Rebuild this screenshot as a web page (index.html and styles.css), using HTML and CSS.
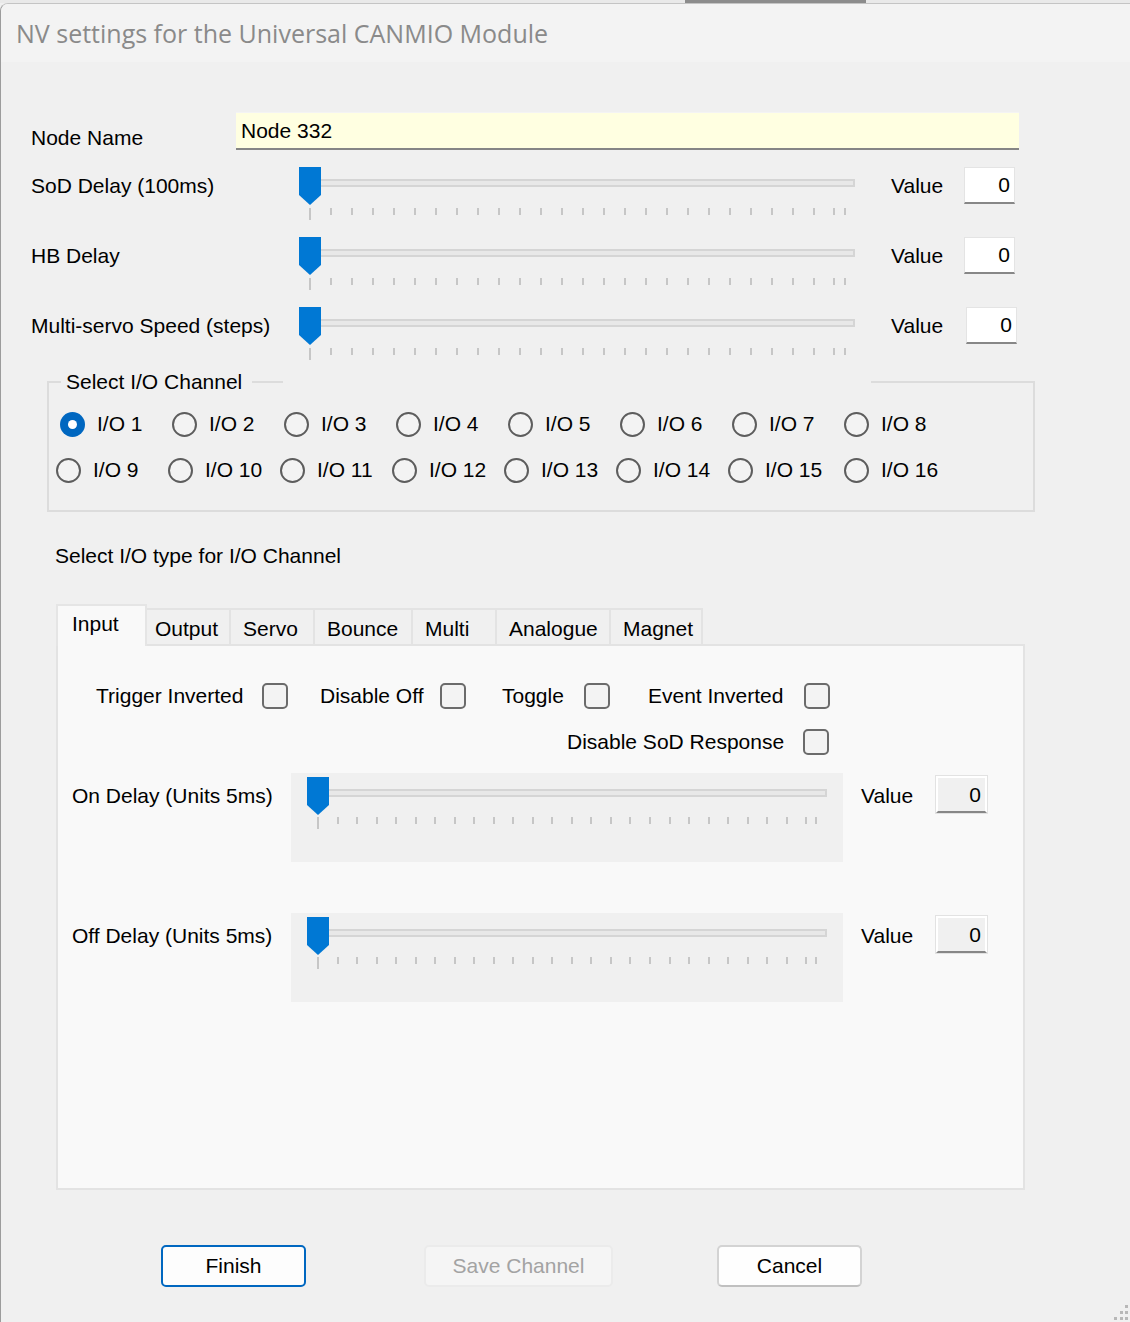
FILE: index.html
```html
<!DOCTYPE html>
<html>
<head>
<meta charset="utf-8">
<title>NV settings</title>
<link rel="stylesheet" href="styles.css">
</head>
<body>
<div class="strip"></div>
<div class="window">
  <div class="titlebar"><span class="title">NV settings for the Universal CANMIO Module</span></div>
  <div class="client">
    <div class="row-node">
      <div class="lbl lbl-node">Node Name</div>
      <div class="textbox">Node 332</div>
    </div>

    <div class="srow">
      <div class="lbl slbl">SoD Delay (100ms)</div>
      <div class="slider big">
        <div class="sl-top"><div class="track"></div><svg class="thumb" viewBox="0 0 22 38"><path d="M0 0H22V28L11 38L0 28Z" fill="#0078d4"/></svg></div>
        <div class="ticks"><div class="tk-run"><div class="tk-first"></div></div><div class="tk-last"></div></div>
      </div>
      <div class="lbl vlbl">Value</div>
      <div class="vbox">0</div>
    </div>

    <div class="srow">
      <div class="lbl slbl">HB Delay</div>
      <div class="slider big">
        <div class="sl-top"><div class="track"></div><svg class="thumb" viewBox="0 0 22 38"><path d="M0 0H22V28L11 38L0 28Z" fill="#0078d4"/></svg></div>
        <div class="ticks"><div class="tk-run"><div class="tk-first"></div></div><div class="tk-last"></div></div>
      </div>
      <div class="lbl vlbl">Value</div>
      <div class="vbox">0</div>
    </div>

    <div class="srow">
      <div class="lbl slbl">Multi-servo Speed (steps)</div>
      <div class="slider big">
        <div class="sl-top"><div class="track"></div><svg class="thumb" viewBox="0 0 22 38"><path d="M0 0H22V28L11 38L0 28Z" fill="#0078d4"/></svg></div>
        <div class="ticks"><div class="tk-run"><div class="tk-first"></div></div><div class="tk-last"></div></div>
      </div>
      <div class="lbl vlbl">Value</div>
      <div class="vbox vbox-shift">0</div>
    </div>

    <div class="group">
      <div class="gtop">
        <div class="gseg gseg-a"></div>
        <div class="lbl glegend">Select I/O Channel</div>
        <div class="gseg gseg-b"></div>
        <div class="ggap"></div>
        <div class="gseg gseg-c"></div>
      </div>
      <div class="rrow rrow1">
        <div class="ritem"><span class="radio on"></span><span class="lbl">I/O 1</span></div>
        <div class="ritem"><span class="radio"></span><span class="lbl">I/O 2</span></div>
        <div class="ritem"><span class="radio"></span><span class="lbl">I/O 3</span></div>
        <div class="ritem"><span class="radio"></span><span class="lbl">I/O 4</span></div>
        <div class="ritem"><span class="radio"></span><span class="lbl">I/O 5</span></div>
        <div class="ritem"><span class="radio"></span><span class="lbl">I/O 6</span></div>
        <div class="ritem"><span class="radio"></span><span class="lbl">I/O 7</span></div>
        <div class="ritem"><span class="radio"></span><span class="lbl">I/O 8</span></div>
      </div>
      <div class="rrow rrow2">
        <div class="ritem"><span class="radio"></span><span class="lbl">I/O 9</span></div>
        <div class="ritem"><span class="radio"></span><span class="lbl">I/O 10</span></div>
        <div class="ritem"><span class="radio"></span><span class="lbl">I/O 11</span></div>
        <div class="ritem"><span class="radio"></span><span class="lbl">I/O 12</span></div>
        <div class="ritem"><span class="radio"></span><span class="lbl">I/O 13</span></div>
        <div class="ritem"><span class="radio"></span><span class="lbl">I/O 14</span></div>
        <div class="ritem"><span class="radio"></span><span class="lbl">I/O 15</span></div>
        <div class="ritem ritem-last"><span class="radio"></span><span class="lbl">I/O 16</span></div>
      </div>
    </div>

    <div class="lbl typelbl">Select I/O type for I/O Channel</div>

    <div class="tabs">
      <div class="tab sel">Input</div>
      <div class="tab t-output">Output</div>
      <div class="tab t-servo">Servo</div>
      <div class="tab t-bounce">Bounce</div>
      <div class="tab t-multi">Multi</div>
      <div class="tab t-analogue">Analogue</div>
      <div class="tab t-magnet">Magnet</div>
    </div>
    <div class="panel">
      <div class="cbrow cbrow1">
        <div class="cbitem cb-a"><span class="lbl">Trigger Inverted</span><span class="cbox"></span></div>
        <div class="cbitem cb-b"><span class="lbl">Disable Off</span><span class="cbox"></span></div>
        <div class="cbitem cb-c"><span class="lbl">Toggle</span><span class="cbox"></span></div>
        <div class="cbitem cb-d"><span class="lbl">Event Inverted</span><span class="cbox"></span></div>
      </div>
      <div class="cbrow cbrow2">
        <div class="cbitem cb-e"><span class="lbl">Disable SoD Response</span><span class="cbox"></span></div>
      </div>

      <div class="psec psec1">
        <div class="lbl plbl">On Delay (Units 5ms)</div>
        <div class="slpanel">
          <div class="slider small">
            <div class="sl-top"><div class="track"></div><svg class="thumb" viewBox="0 0 22 38"><path d="M0 0H22V28L11 38L0 28Z" fill="#0078d4"/></svg></div>
            <div class="ticks"><div class="tk-run"><div class="tk-first"></div></div><div class="tk-last"></div></div>
          </div>
        </div>
        <div class="lbl pvlbl">Value</div>
        <div class="vbox vbox-grey">0</div>
      </div>

      <div class="psec psec2">
        <div class="lbl plbl">Off Delay (Units 5ms)</div>
        <div class="slpanel">
          <div class="slider small">
            <div class="sl-top"><div class="track"></div><svg class="thumb" viewBox="0 0 22 38"><path d="M0 0H22V28L11 38L0 28Z" fill="#0078d4"/></svg></div>
            <div class="ticks"><div class="tk-run"><div class="tk-first"></div></div><div class="tk-last"></div></div>
          </div>
        </div>
        <div class="lbl pvlbl">Value</div>
        <div class="vbox vbox-grey">0</div>
      </div>
    </div>

    <div class="buttons">
      <div class="btn btn-finish">Finish</div>
      <div class="btn btn-save">Save Channel</div>
      <div class="btn btn-cancel">Cancel</div>
    </div>
  </div>
  <svg class="grip" viewBox="0 0 18 18">
    <rect x="13" y="1" width="3" height="3" fill="#b8b8b8"/>
    <rect x="8" y="7" width="3" height="3" fill="#b8b8b8"/>
    <rect x="13" y="7" width="3" height="3" fill="#b8b8b8"/>
    <rect x="2" y="13" width="3" height="3" fill="#b8b8b8"/>
    <rect x="8" y="13" width="3" height="3" fill="#b8b8b8"/>
    <rect x="13" y="13" width="3" height="3" fill="#b8b8b8"/>
  </svg>
</div>
</body>
</html>
```

FILE: styles.css
```css
html, body {
  margin: 0;
  padding: 0;
}
body {
  width: 1130px;
  height: 1322px;
  overflow: hidden;
  background: #f0f0f0;
  font-family: "Liberation Sans", Arial, sans-serif;
  font-size: 21px;
  color: #000;
}
.strip {
  height: 3px;
  background: linear-gradient(to right, #e9e9e9 0 685px, #8c8c8c 685px 866px, #e9e9e9 866px);
}
.window {
  position: relative;
  height: 1319px;
  box-sizing: border-box;
  border-left: 1px solid #9c9c9c;
  border-top: 1px solid #c4c4c4;
  border-top-left-radius: 8px;
  background: #f0f0f0;
  overflow: hidden;
}
.titlebar {
  height: 58px;
  background: #f3f3f3;
  padding-left: 15px;
  box-sizing: border-box;
  padding-top: 13px;
}
.title {
  font-family: "Open Sans", "Noto Sans", sans-serif;
  font-size: 25px;
  line-height: 32px;
  color: #8a8a8a;
}
.client {
  display: flex;
  flex-direction: column;
}
.lbl {
  line-height: 24px;
  white-space: nowrap;
}

/* Node name */
.row-node {
  display: flex;
  margin-top: 50px;
  height: 38px;
}
.lbl-node {
  margin-left: 30px;
  width: 205px;
  margin-top: 14px;
}
.textbox {
  width: 783px;
  height: 38px;
  box-sizing: border-box;
  background: #ffffe1;
  border-bottom: 2px solid #858585;
  border-top: 1px solid #f4f4f4;
  padding: 6px 0 0 5px;
  line-height: 24px;
}

/* slider rows */
.srow {
  display: flex;
  height: 70px;
}
.row-node + .srow { margin-top: 15px; }
.slbl {
  margin-left: 30px;
  width: 268px;
  margin-top: 9px;
}
.vlbl {
  margin-left: 36px;
  width: 73px;
  margin-top: 9px;
}
.slider.big {
  width: 556px;
  margin-top: 2px;
}
.sl-top {
  position: relative;
  height: 38px;
  box-sizing: border-box;
  padding-top: 12px;
}
.track {
  height: 8px;
  box-sizing: border-box;
  border: 2px solid #d5d5d5;
  background: #e8e8e8;
}
.thumb {
  position: absolute;
  left: 0;
  top: 0;
  width: 22px;
  height: 38px;
  display: block;
}
.ticks {
  display: flex;
  align-items: flex-start;
  margin-left: 10px;
}
.big .ticks { margin-top: 3px; }
.small .ticks { margin-top: 2px; }
.tk-run {
  height: 7px;
  display: flex;
  align-items: flex-start;
}
.big .tk-run {
  width: 526.5px;
  background: repeating-linear-gradient(to right, #c6c6c6 0 2px, transparent 2px 20.98px);
}
.small .tk-run {
  width: 490.25px;
  background: repeating-linear-gradient(to right, #c6c6c6 0 2px, transparent 2px 19.53px);
}
.tk-first {
  width: 2px;
  height: 12px;
  background: #c6c6c6;
}
.tk-last {
  width: 2px;
  height: 7px;
  background: #c6c6c6;
}
.big .tk-last { margin-left: 8.49px; }
.small .tk-last { margin-left: 7.77px; }

.vbox {
  width: 51px;
  height: 37px;
  margin-top: 2px;
  box-sizing: border-box;
  background: #fff;
  border: 1px solid #e4e4e4;
  border-bottom: 2px solid #878787;
  text-align: right;
  padding-right: 4px;
  line-height: 33px;
}
.vbox-shift { margin-left: 2px; }

/* group */
.group {
  display: flex;
  flex-direction: column;
  margin-top: 6px;
  margin-left: 46px;
  width: 988px;
  height: 131px;
  box-sizing: border-box;
  border-left: 2px solid #dcdcdc;
  border-right: 2px solid #dcdcdc;
  border-bottom: 2px solid #dcdcdc;
}
.gtop {
  display: flex;
  align-items: center;
  height: 24px;
  margin-top: -11px;
  margin-left: -2px;
  margin-right: -2px;
}
.gseg {
  height: 2px;
  background: #dcdcdc;
}
.gseg-a { width: 14px; }
.glegend {
  width: 186px;
  padding-left: 5px;
}
.gseg-b { width: 31px; }
.ggap { width: 588px; }
.gseg-c { flex: 1; }
.rrow {
  display: flex;
  height: 30px;
  align-items: center;
}
.rrow1 { margin-top: 15px; padding-left: 11px; }
.rrow2 { margin-top: 16px; padding-left: 7px; }
.ritem {
  display: flex;
  align-items: center;
  width: 112px;
  gap: 12px;
}
.ritem-last { margin-left: 4px; }
.radio {
  width: 25px;
  height: 25px;
  box-sizing: border-box;
  border: 2px solid #5d5d5d;
  border-radius: 50%;
  background: #f3f3f3;
  flex: none;
  display: flex;
  align-items: center;
  justify-content: center;
}
.radio.on {
  border: none;
  background: #0067c0;
}
.radio.on::after {
  content: "";
  width: 9px;
  height: 9px;
  border-radius: 50%;
  background: #fff;
}

.typelbl {
  margin-top: 32px;
  margin-left: 54px;
}

/* tabs */
.tabs {
  display: flex;
  align-items: flex-end;
  margin-top: 36px;
  margin-left: 55px;
  height: 40px;
}
.tab {
  height: 36px;
  box-sizing: border-box;
  background: #f0f0f0;
  border-top: 2px solid #e3e3e3;
  border-right: 2px solid #e3e3e3;
  line-height: 24px;
  padding-top: 7px;
  padding-left: 12px;
}
.tab.sel {
  position: relative;
  z-index: 1;
  height: 42px;
  margin-bottom: -2px;
  width: 91px;
  background: #f9f9f9;
  border: 2px solid #e5e5e5;
  border-bottom: none;
  padding-left: 14px;
  padding-top: 6px;
}
.t-output { width: 84px; padding-left: 8px; }
.t-servo { width: 84px; }
.t-bounce { width: 98px; }
.t-multi { width: 84px; }
.t-analogue { width: 114px; }
.t-magnet { width: 92px; }

.panel {
  display: flex;
  flex-direction: column;
  margin-left: 55px;
  width: 969px;
  height: 546px;
  box-sizing: border-box;
  background: #f9f9f9;
  border: 2px solid #e3e3e3;
}
.cbrow {
  display: flex;
  height: 26px;
  align-items: center;
}
.cbrow1 { margin-top: 37px; padding-left: 38px; }
.cbrow2 { margin-top: 20px; }
.cbitem {
  display: flex;
  align-items: center;
  justify-content: space-between;
}
.cb-a { width: 192px; }
.cb-b { width: 146px; margin-left: 32px; }
.cb-c { width: 108px; margin-left: 36px; }
.cb-d { width: 182px; margin-left: 38px; }
.cb-e { margin-left: 509px; width: 262px; }
.cbox {
  width: 26px;
  height: 26px;
  box-sizing: border-box;
  border: 2px solid #6b6b6b;
  border-radius: 5px;
  background: #f3f3f3;
  flex: none;
}

.psec {
  display: flex;
  height: 89px;
}
.psec1 { margin-top: 18px; }
.psec2 { margin-top: 51px; }
.plbl {
  margin-left: 14px;
  width: 219px;
  margin-top: 11px;
}
.slpanel {
  width: 552px;
  height: 89px;
  box-sizing: border-box;
  background: #f0f0f0;
  padding: 4px 0 0 16px;
}
.slider.small { width: 520px; }
.pvlbl {
  margin-left: 18px;
  width: 75px;
  margin-top: 11px;
}
.vbox-grey {
  margin-top: 3px;
  background: #f0f0f0;
  border: 2px solid #fff;
  border-bottom: 2px solid #878787;
  box-shadow: 0 0 0 1px #e2e2e2;
  line-height: 33px;
}

/* buttons */
.buttons {
  display: flex;
  margin-top: 55px;
}
.btn {
  height: 42px;
  box-sizing: border-box;
  border-radius: 5px;
  text-align: center;
  line-height: 38px;
}
.btn-finish {
  margin-left: 160px;
  width: 145px;
  background: #fdfdfd;
  border: 2px solid #0067c0;
}
.btn-save {
  margin-left: 118px;
  width: 189px;
  background: #f5f5f5;
  border: 2px solid #ebebeb;
  color: #a3a3a3;
}
.btn-cancel {
  margin-left: 104px;
  width: 145px;
  background: #fefefe;
  border: 2px solid #d3d3d3;
  border-bottom-color: #c0c0c0;
}
.grip {
  position: absolute;
  right: 0;
  bottom: 0;
  width: 18px;
  height: 18px;
}
```
